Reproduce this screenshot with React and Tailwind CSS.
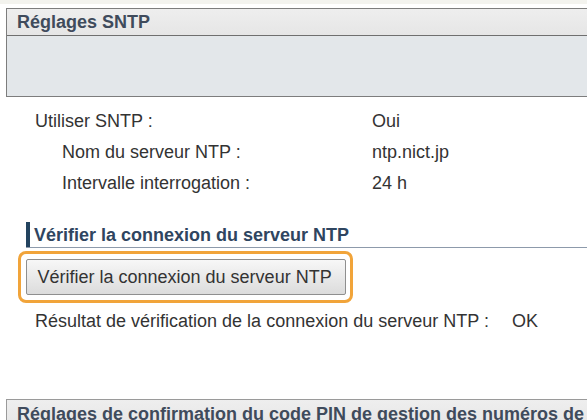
import React from "react";

export default function App() {
  return (
    <div
      className="w-[587px] h-[420px] overflow-hidden bg-white text-[18px] text-[#333]"
      style={{ fontFamily: '"Liberation Sans", Arial, sans-serif' }}
    >
      <div className="h-[4px] bg-[#f3f3ee]" />
      {/* Réglages SNTP box */}
      <div className="mt-[4px] ml-[6px] w-[620px] border border-[#7d7d7d]">
        <div className="h-[27px] flex items-center pl-[10px] font-bold text-[#3f4b5c] bg-gradient-to-b from-[#eeeeee] to-[#e6e6e6] border-b border-[#6f6f6f]">
          Réglages SNTP
        </div>
        <div className="h-[60px] bg-[#e3e7ea]" />
      </div>

      {/* Rows */}
      <div className="mt-[9px] flex flex-col">
        <div className="grid grid-cols-[372px_1fr] h-[31px] items-center">
          <div className="pl-[35px]">Utiliser SNTP :</div>
          <div>Oui</div>
        </div>
        <div className="grid grid-cols-[372px_1fr] h-[31px] items-center">
          <div className="pl-[62px]">Nom du serveur NTP :</div>
          <div>ntp.nict.jp</div>
        </div>
        <div className="grid grid-cols-[372px_1fr] h-[31px] items-center">
          <div className="pl-[62px]">Intervalle interrogation :</div>
          <div>24 h</div>
        </div>
      </div>

      {/* Section heading */}
      <div className="mt-[23px] ml-[26px] border-b border-[#8d9aab] flex items-stretch h-[26px]">
        <div className="w-[4px] bg-[#23435f]" />
        <div className="pl-[4px] flex items-center font-bold text-[#2f4560] leading-none">
          Vérifier la connexion du serveur NTP
        </div>
      </div>

      {/* Button */}
      <div className="mt-[3px] ml-[18px] w-[335px] h-[52px] rounded-[8px] border-[3px] border-[#f1a43a] flex items-center justify-center">
        <div className="w-[320px] h-[36px] rounded-[2px] border border-[#8f8f8f] bg-gradient-to-b from-[#f7f7f7] to-[#dcdcdc] flex items-center pl-[11px] text-[#333]">
          Vérifier la connexion du serveur NTP
        </div>
      </div>

      {/* Result */}
      <div className="mt-[4px] h-[28px] flex items-center">
        <div className="pl-[35px] w-[512px]">
          Résultat de vérification de la connexion du serveur NTP :
        </div>
        <div>OK</div>
      </div>

      {/* Bottom box */}
      <div className="mt-[64px] ml-[6px] w-[620px] border border-[#9a9a9a] bg-gradient-to-b from-[#eeeeee] to-[#e6e6e6]">
        <div className="h-[28px] flex items-center pl-[10px] font-bold text-[#3f4b5c] whitespace-nowrap">
          Réglages de confirmation du code PIN de gestion des numéros de
        </div>
      </div>
    </div>
  );
}
